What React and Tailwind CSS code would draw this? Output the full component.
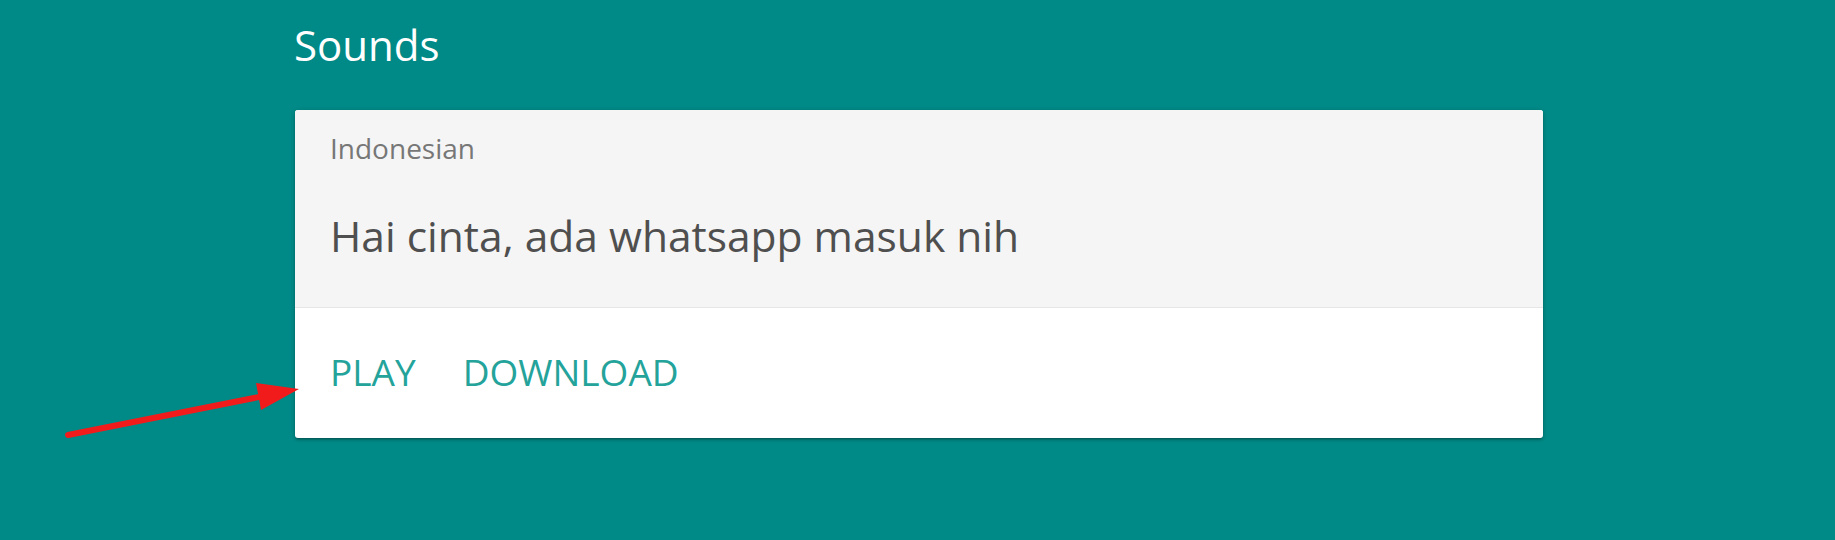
import React from "react";

export default function App() {
  return (
    <div
      className="relative w-full h-[540px] bg-[#008a87] overflow-hidden"
      style={{ fontFamily: '"Open Sans", "Noto Sans", sans-serif' }}
    >
      <div className="pl-[294px] pt-[20px] w-[1543px]">
        <h1 className="text-[42px] leading-[50px] text-white font-normal">Sounds</h1>
        <div className="mt-[40px] ml-px rounded-[3px] overflow-hidden bg-white shadow-[0_2px_2px_0_rgba(0,0,0,0.14),0_3px_1px_-2px_rgba(0,0,0,0.12),0_1px_5px_0_rgba(0,0,0,0.2)]">
          <div className="bg-[#f5f5f5] px-[35px] pt-[18px] pb-[40px] border-b border-[#e6e6e6]">
            <div className="text-[28px] leading-[40px] text-[#777777]">Indonesian</div>
            <div className="mt-[36px] text-[42.5px] leading-[63px] text-[#4f4f4f]">
              Hai cinta, ada whatsapp masuk nih
            </div>
          </div>
          <div className="flex gap-[47px] px-[35px] pt-[38px] pb-[40px] text-[37px] leading-[52px] text-[#24a39b]">
            <span>PLAY</span>
            <span>DOWNLOAD</span>
          </div>
        </div>
      </div>
      <svg
        className="absolute left-0 top-0 pointer-events-none"
        width="1835"
        height="540"
        viewBox="0 0 1835 540"
      >
        <line x1="68" y1="435" x2="264" y2="396" stroke="#f21b1b" strokeWidth="6" strokeLinecap="round" />
        <polygon points="299,389 256,383 261,410" fill="#f21b1b" />
      </svg>
    </div>
  );
}
